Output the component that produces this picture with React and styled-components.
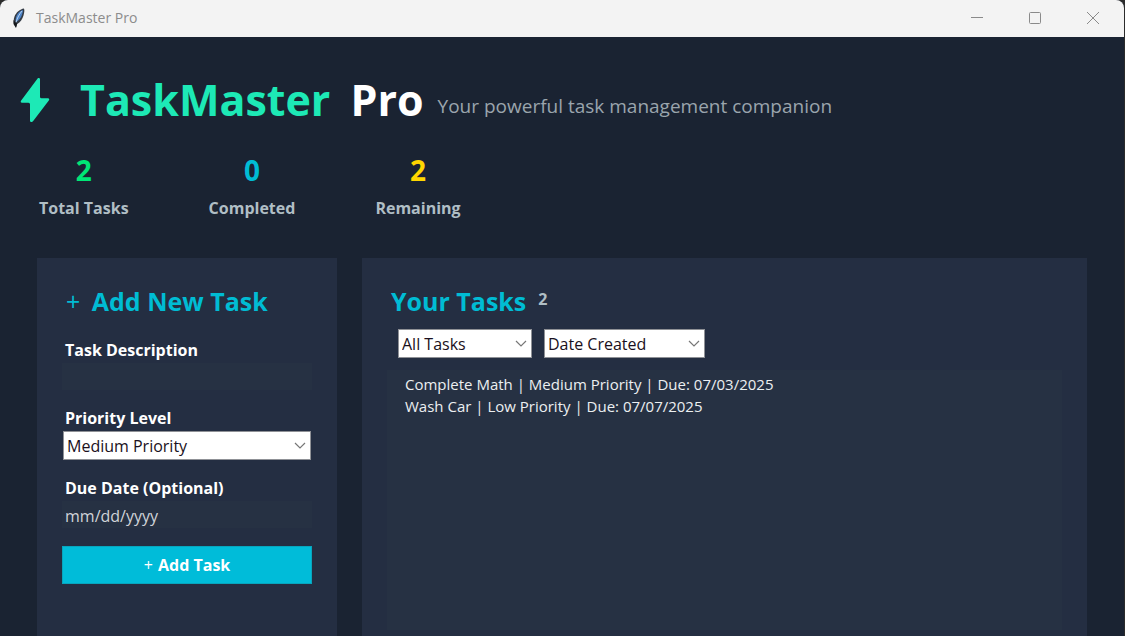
import React, { useState } from "react";
import styled, { createGlobalStyle } from "styled-components";

const GlobalStyle = createGlobalStyle`
  *, *::before, *::after { box-sizing: border-box; }
  html, body, #root { height: 100%; }
  body {
    margin: 0;
    overflow: hidden;
    background: #2b2b2b;
    color: #ffffff;
    font-family: "Open Sans", "Noto Sans", sans-serif;
    font-size: 16px;
    line-height: 22px;
  }
  button, input, select { font: inherit; }
`;

const Window = styled.div`
  display: flex;
  flex-direction: column;
  height: 100%;
  margin-right: 1px;
  overflow: hidden;
  border-radius: 8px 8px 0 0;
  background: #1a2332;
`;

const TitleBar = styled.header`
  display: flex;
  flex: none;
  align-items: center;
  height: 37px;
  padding: 0 2px 2px 11px;
  gap: 9px;
  background: #f3f3f3;
  color: #8c8c8c;
  font-size: 14px;
`;

const WindowTitle = styled.span`
  flex: 1;
`;

const WindowControls = styled.div`
  display: flex;
`;

const WindowButton = styled.button`
  display: grid;
  place-items: center;
  width: 58px;
  height: 35px;
  padding: 0;
  border: 0;
  background: transparent;
  color: #8a8a8a;
`;

const Brand = styled.div`
  display: flex;
  flex: none;
  align-items: center;
  padding: 30px 20px 0;
  white-space: nowrap;
`;

const BrandName = styled.h1`
  display: flex;
  align-items: center;
  margin: 0 14px 0 0;
  font-size: 43px;
  line-height: 66px;
  font-weight: 700;
`;

const BrandAccent = styled.span`
  margin: 0 20px 0 30px;
  color: #1de9b6;
`;

const Tagline = styled.p`
  margin: 0;
  padding-top: 12px;
  color: #9aa5ad;
  font-size: 19px;
`;

const Stats = styled.dl`
  display: flex;
  flex: none;
  gap: 80px;
  margin: 0;
  padding: 18px 39px 39px;
`;

const Stat = styled.div`
  display: flex;
  flex-direction: column-reverse;
  align-items: center;
  gap: 8px;
`;

const StatLabel = styled.dt`
  color: #b0bec5;
  font-weight: 700;
`;

const StatValue = styled.dd`
  margin: 0;
  color: ${(p) => p.$color};
  font-size: 28px;
  line-height: 38px;
  font-weight: 700;
`;

const Columns = styled.main`
  display: flex;
  flex: 1;
  gap: 25px;
  min-height: 0;
  padding: 0 37px;
`;

const Panel = styled.section`
  display: flex;
  flex-direction: column;
  flex: ${(p) => (p.$fill ? "1" : "0 0 300px")};
  min-width: 0;
  padding: 24px 25px 6px;
  background: #242e42;
`;

const PanelTitle = styled.h2`
  margin: 0;
  color: #00bcd4;
  font-size: 25px;
  line-height: 38px;
  font-weight: 700;
`;

const FormTitle = styled(PanelTitle)`
  padding-left: 4px;
`;

const Form = styled.form`
  display: flex;
  flex-direction: column;
  margin: 19px 0 0;
`;

const Field = styled.div`
  display: flex;
  flex-direction: column;
  gap: 2px;
  margin-bottom: ${(p) => p.$space}px;
`;

const Label = styled.label`
  padding-left: 3px;
  font-weight: 700;
`;

const TextInput = styled.input`
  width: 100%;
  height: 27px;
  padding: 2px 3px 0;
  border: 0;
  outline: 0;
  background: #263143;
  color: #ffffff;

  &::placeholder { color: #d0d3d8; opacity: 1; }
`;

const SelectWrap = styled.div`
  display: grid;
  align-items: center;
  width: ${(p) => p.$width || "auto"};
  margin: ${(p) => (p.$inset ? "0 1px" : "0")};

  & > * { grid-area: 1 / 1; }
  & > svg { justify-self: end; margin-right: 5px; pointer-events: none; }
`;

const Select = styled.select`
  appearance: none;
  width: 100%;
  height: 29px;
  padding: 0 24px 0 3px;
  border: 1px solid #8f9196;
  border-radius: 0;
  outline: 0;
  background: #ffffff;
  color: #1a1020;
`;

const SubmitButton = styled.button`
  height: 38px;
  border: 1px solid #08a5bd;
  background: #00bcd9;
  color: #ffffff;
  font-weight: 700;
`;

const ListHeader = styled.div`
  display: flex;
  gap: 12px;
  padding-left: 4px;
`;

const Count = styled.span`
  padding-top: 6px;
  color: #b0bec5;
  font-weight: 700;
`;

const Filters = styled.div`
  display: flex;
  gap: 12px;
  padding: 9px 11px 12px;
`;

const TaskList = styled.ul`
  flex: 1;
  min-height: 0;
  margin: 0;
  padding: 3px 18px;
  overflow: hidden;
  background: #263143;
  color: #eceff1;
  font-size: 15px;
  list-style: none;
`;

const Plus = styled.span`
  margin-right: ${(p) => (p.$wide ? "5px" : "1px")};
  font-weight: 400;
`;

const FeatherIcon = () => (
  <svg width="16" height="22" viewBox="0 0 16 22" aria-hidden="true">
    <path d="M13 1.500C9 2 5 5.500 3.500 9.500c-1 2.800-1 5.500-.5 7.500l2 3.500L6.200 17c3.200-1.800 5.300-5 6.300-8.500.8-2.800 1.200-5.200.5-7Z" fill="#343b45" />
    <path d="M11.800 3C8.500 4 5.800 7 5 10.500c-.4 1.700-.4 3.300-.1 4.500 3-1.500 5-4 6-7 .7-2 1.200-3.700.9-5Z" fill="#4c83c8" />
    <path d="M11 4C8.500 7 6.300 10.500 5 15.500" stroke="#b8d3ef" strokeWidth="1" fill="none" />
    <path d="M2.500 13v4l2.500 4 1.200-5-1.700-.5Z" fill="#15181c" />
  </svg>
);

const BoltIcon = () => (
  <svg width="30" height="46" viewBox="0 0 30 46" aria-hidden="true">
    <path d="M17.600 1.400C18.200.6 20 .9 20 2.200V19.800q0 1.500 1.500 1.500H28c1.200 0 1.600 1 1 2L13 44.200c-1 1.300-3 .8-3-.8V27.300q0-1.500-1.500-1.500H2c-1.200 0-1.600-1-1-2Z" fill="#1de9b6" />
  </svg>
);

const Chevron = () => (
  <svg width="12" height="8" viewBox="0 0 12 8" fill="none" stroke="#777777" strokeWidth="1.2" aria-hidden="true">
    <path d="m1 1 5 5 5-5" />
  </svg>
);

const controls = [
  { name: "Minimize", d: "M1 6.500h12" },
  { name: "Maximize", d: "M2.500 1.500h9q1 0 1 1v9q0 1-1 1h-9q-1 0-1-1v-9q0-1 1-1Z" },
  { name: "Close", d: "M1 1l12 12M13 1 1 13" },
];

const tasks = [
  { id: 1, title: "Complete Math", priority: "Medium Priority", due: "07/03/2025" },
  { id: 2, title: "Wash Car", priority: "Low Priority", due: "07/07/2025" },
];

const stats = [
  { label: "Total Tasks", value: 2, color: "#00e676" },
  { label: "Completed", value: 0, color: "#00bcd4" },
  { label: "Remaining", value: 2, color: "#ffd600" },
];

function Dropdown({ options, width, inset, ...rest }) {
  return (
    <SelectWrap $width={width} $inset={inset}>
      <Select {...rest}>
        {options.map((o) => (
          <option key={o}>{o}</option>
        ))}
      </Select>
      <Chevron />
    </SelectWrap>
  );
}

export default function App() {
  const [description, setDescription] = useState("");
  const [due, setDue] = useState("");

  return (
    <>
      <GlobalStyle />
      <Window>
        <TitleBar>
          <FeatherIcon />
          <WindowTitle>TaskMaster Pro</WindowTitle>
          <WindowControls>
            {controls.map((c) => (
              <WindowButton key={c.name} type="button" aria-label={c.name}>
                <svg width="14" height="14" viewBox="0 0 14 14" fill="none" stroke="currentColor" aria-hidden="true">
                  <path d={c.d} />
                </svg>
              </WindowButton>
            ))}
          </WindowControls>
        </TitleBar>

        <Brand>
          <BrandName>
            <BoltIcon />
            <BrandAccent>TaskMaster</BrandAccent>
            <span>Pro</span>
          </BrandName>
          <Tagline>Your powerful task management companion</Tagline>
        </Brand>

        <Stats>
          {stats.map((s) => (
            <Stat key={s.label}>
              <StatLabel>{s.label}</StatLabel>
              <StatValue $color={s.color}>{s.value}</StatValue>
            </Stat>
          ))}
        </Stats>

        <Columns>
          <Panel>
            <FormTitle>
              <Plus $wide>+</Plus> Add New Task
            </FormTitle>
            <Form onSubmit={(e) => e.preventDefault()}>
              <Field $space={17}>
                <Label htmlFor="description">Task Description</Label>
                <TextInput id="description" value={description} onChange={(e) => setDescription(e.target.value)} />
              </Field>
              <Field $space={17}>
                <Label htmlFor="priority">Priority Level</Label>
                <Dropdown
                  id="priority"
                  inset
                  defaultValue="Medium Priority"
                  options={["Low Priority", "Medium Priority", "High Priority"]}
                />
              </Field>
              <Field $space={18}>
                <Label htmlFor="due">Due Date (Optional)</Label>
                <TextInput id="due" placeholder="mm/dd/yyyy" value={due} onChange={(e) => setDue(e.target.value)} />
              </Field>
              <SubmitButton type="submit">
                <Plus>+</Plus> Add Task
              </SubmitButton>
            </Form>
          </Panel>

          <Panel $fill>
            <ListHeader>
              <PanelTitle>Your Tasks</PanelTitle>
              <Count>{tasks.length}</Count>
            </ListHeader>
            <Filters>
              <Dropdown aria-label="Filter tasks" width="134px" options={["All Tasks", "Active", "Completed"]} />
              <Dropdown aria-label="Sort tasks" width="161px" options={["Date Created", "Due Date", "Priority"]} />
            </Filters>
            <TaskList>
              {tasks.map((t) => (
                <li key={t.id}>
                  {t.title} | {t.priority} | Due: {t.due}
                </li>
              ))}
            </TaskList>
          </Panel>
        </Columns>
      </Window>
    </>
  );
}
